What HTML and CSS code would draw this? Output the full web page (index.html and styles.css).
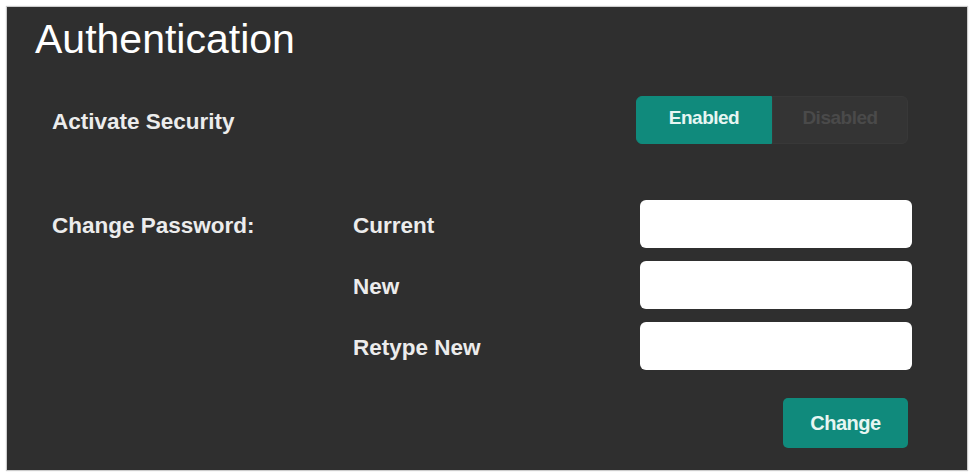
FILE: index.html
```html
<!DOCTYPE html>
<html lang="en">
	<head>
		<meta charset="UTF-8">
		<meta name="viewport" content="width=device-width, initial-scale=1.0">
		<title>Authentication</title>
		<link rel="stylesheet" href="styles.css">
	</head>
	<body>
		<div class="panel">
			<h1 class="title">Authentication</h1>

			<div class="security-row">
				<span class="label">Activate Security</span>
				<div class="toggle">
					<button class="toggle-btn active">Enabled</button>
					<button class="toggle-btn">Disabled</button>
				</div>
			</div>

			<div class="password-grid">
				<span class="label">Change Password:</span>
				<span class="label">Current</span>
				<input type="password" class="field">

				<span></span>
				<span class="label">New</span>
				<input type="password" class="field">

				<span></span>
				<span class="label">Retype New</span>
				<input type="password" class="field">
			</div>

			<div class="actions">
				<button class="btn-change">Change</button>
			</div>
		</div>
	</body>
</html>
```

FILE: styles.css
```css
* {
    margin: 0;
    padding: 0;
    box-sizing: border-box;
}

body {
    font-family: 'Liberation Sans', Arial, sans-serif;
    background: #ffffff;
    width: 973px;
    height: 473px;
    overflow: hidden;
    padding: 7px 6px 3px 7px;
}

.panel {
    width: 960px;
    height: 463px;
    background: #2f2f2f;
    box-shadow: 0 0 1px 1px rgba(0, 0, 0, 0.2);
    padding: 9px 59px 0 45px;
    display: flex;
    flex-direction: column;
}

.title {
    font-size: 41px;
    font-weight: 400;
    line-height: 46px;
    color: #ffffff;
    margin-left: -17px;
}

.label {
    font-size: 22.5px;
    font-weight: 700;
    color: #ececec;
    padding-top: 4px;
}

.security-row {
    margin-top: 34px;
    height: 48px;
    display: flex;
    align-items: center;
    justify-content: space-between;
}

.toggle {
    display: flex;
    height: 48px;
}

.toggle-btn {
    width: 136px;
    border: 1px solid #383838;
    background: #343434;
    color: #4a4a4a;
    font-family: inherit;
    font-size: 19px;
    font-weight: 700;
    letter-spacing: -0.5px;
    padding-bottom: 4px;
    border-radius: 0 6px 6px 0;
}

.toggle-btn.active {
    background: #108a7c;
    border-color: #108a7c;
    color: #e6f6f2;
    border-radius: 6px 0 0 6px;
}

.password-grid {
    margin-top: 56px;
    display: grid;
    grid-template-columns: 301px 287px 272px;
    grid-auto-rows: 48px;
    row-gap: 13px;
    align-items: center;
}

.field {
    height: 48px;
    border: none;
    border-radius: 6px;
    background: #ffffff;
}

.actions {
    margin-top: 28px;
    display: flex;
    justify-content: flex-end;
}

.btn-change {
    width: 125px;
    height: 50px;
    border: none;
    border-radius: 5px;
    background: #108a7c;
    color: #e6f6f2;
    font-family: inherit;
    font-size: 20px;
    font-weight: 700;
    letter-spacing: -0.5px;
}
```
